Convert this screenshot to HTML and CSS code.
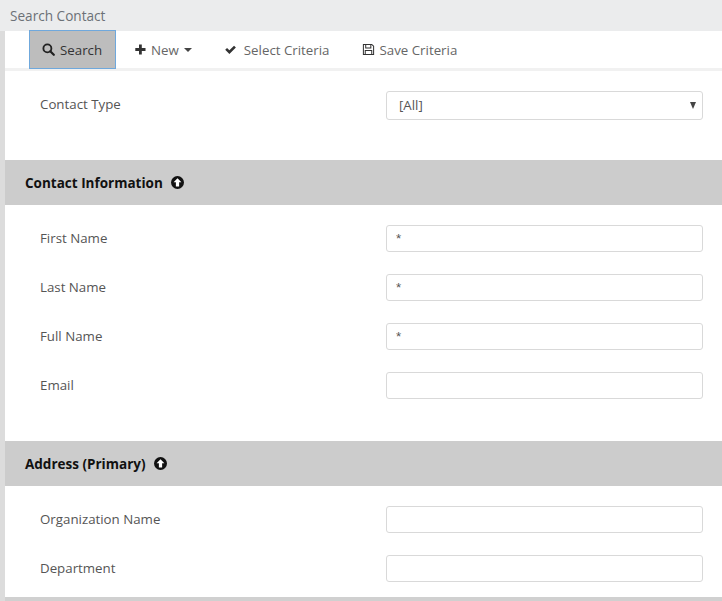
FILE: index.html
```html
<!DOCTYPE html>
<html lang="en">
<head>
    <meta charset="UTF-8">
    <title>Search Contact</title>
    <link rel="stylesheet" href="styles.css">
</head>
<body>
    <div class="page-title">Search Contact</div>
    <div class="panel">
        <div class="toolbar">
            <button class="tool active">
                <svg class="icon" viewBox="0 0 14 14"><circle cx="5.8" cy="5.8" r="4.3" fill="none" stroke="currentColor" stroke-width="2"/><path d="M8.9 8.9l3.8 3.8" stroke="currentColor" stroke-width="2.4" stroke-linecap="round"/></svg>
                Search
            </button>
            <button class="tool tool-new">
                <svg class="icon" viewBox="0 0 14 14"><path d="M5.4 1.5h3v4h4v3h-4v4h-3v-4h-4v-3h4z" fill="#333"/></svg>
                New <span class="caret"></span>
            </button>
            <button class="tool tool-select">
                <svg class="icon" viewBox="0 0 14 14"><path d="M1.3 7.4l2-2 2.5 2.5 5-5 2 2-7 7z" fill="#333"/></svg>
                Select Criteria
            </button>
            <button class="tool">
                <svg class="icon" viewBox="0 0 14 14"><path d="M1.5 1.5h9l2 2v9h-11z" fill="none" stroke="#333" stroke-width="1.1"/><path d="M4 2v3.5h5.5V2M3.5 12.5V8h7v4.5" fill="none" stroke="#333" stroke-width="1.1"/></svg>
                Save Criteria
            </button>
        </div>

        <div class="fields first">
            <div class="row">
                <label>Contact Type</label>
                <div class="select">[All]</div>
            </div>
        </div>

        <div class="section-head">
            Contact Information
            <svg class="icon" viewBox="1 1 12 12"><circle cx="7" cy="7" r="6" fill="#111"/><path d="M7 3l3.6 3.8H8.5V10.6H5.5V6.8H3.4z" fill="#fff"/></svg>
        </div>
        <div class="fields">
            <div class="row"><label>First Name</label><input type="text" value="*"></div>
            <div class="row"><label>Last Name</label><input type="text" value="*"></div>
            <div class="row"><label>Full Name</label><input type="text" value="*"></div>
            <div class="row"><label>Email</label><input type="text"></div>
        </div>

        <div class="section-head">
            Address (Primary)
            <svg class="icon" viewBox="1 1 12 12"><circle cx="7" cy="7" r="6" fill="#111"/><path d="M7 3l3.6 3.8H8.5V10.6H5.5V6.8H3.4z" fill="#fff"/></svg>
        </div>
        <div class="fields last">
            <div class="row"><label>Organization Name</label><input type="text"></div>
            <div class="row"><label>Department</label><input type="text"></div>
        </div>
    </div>
</body>
</html>
```

FILE: styles.css
```css
html, body {
    height: 100%;
}
body {
    margin: 0;
    overflow: hidden;
    background-color: #ebeced;
    color: #444;
    font-family: "Open Sans", "Liberation Sans", sans-serif;
    font-size: 13.3px;
}
.page-title {
    height: 31px;
    line-height: 32px;
    padding-left: 10px;
    color: #6c7177;
    font-size: 13.6px;
}
.panel {
    height: 566px;
    margin-left: 5px;
    background-color: #fff;
    box-shadow: -5px 0 0 #dcdcdc;
    border-bottom: 4px solid #d0d0d0;
}
.toolbar {
    display: flex;
    height: 37px;
    padding-left: 24px;
    border-bottom: 3px solid #f1f1f1;
}
.tool {
    display: flex;
    align-items: center;
    gap: 5px;
    height: 37px;
    padding: 0 16px;
    border: 0;
    background: none;
    color: #666;
    font: inherit;
}
.tool.active {
    box-sizing: border-box;
    width: 87px;
    height: 39px;
    margin-top: -1px;
    padding: 0 12px;
    margin-right: 2px;
    background-color: #bdbdbd;
    border: 1px solid #6fa8dc;
    color: #333;
}
.tool-new {
    gap: 4px;
}
.tool-new .caret {
    margin-left: 1px;
}
.tool-select {
    gap: 7px;
}
.icon {
    width: 13px;
    height: 13px;
    color: #222;
    flex: none;
}
.caret {
    width: 0;
    height: 0;
    border-top: 4px solid #444;
    border-left: 4px solid transparent;
    border-right: 4px solid transparent;
}
.section-head {
    display: flex;
    align-items: center;
    gap: 8px;
    height: 45px;
    padding-left: 20px;
    background-color: #cccccc;
    color: #111;
    font-size: 13.5px;
    font-weight: 700;
}
.fields {
    display: flex;
    flex-direction: column;
    gap: 22px;
    padding: 20px 19px 42px 35px;
}
.fields.first {
    padding-top: 20px;
    padding-bottom: 40px;
}
.fields.last {
    padding-bottom: 0;
}
.row {
    display: flex;
    align-items: center;
    justify-content: space-between;
}
.row label {
    margin-bottom: 2px;
    color: #555;
}
.first .row label {
    margin-bottom: 3px;
}
.row input,
.select {
    box-sizing: border-box;
    width: 317px;
    height: 27px;
    padding: 0 9px;
    border: 1px solid #d9d9d9;
    border-radius: 3px;
    background-color: #fff;
    color: #555;
    font: inherit;
    font-family: "Liberation Sans", sans-serif;
    outline: none;
}
.select {
    position: relative;
    height: 29px;
    padding-left: 12px;
    line-height: 27px;
    font-family: inherit;
}
.select::after {
    content: "";
    position: absolute;
    right: 6px;
    top: 10px;
    border-top: 7px solid #444;
    border-left: 3px solid transparent;
    border-right: 3px solid transparent;
}
```
